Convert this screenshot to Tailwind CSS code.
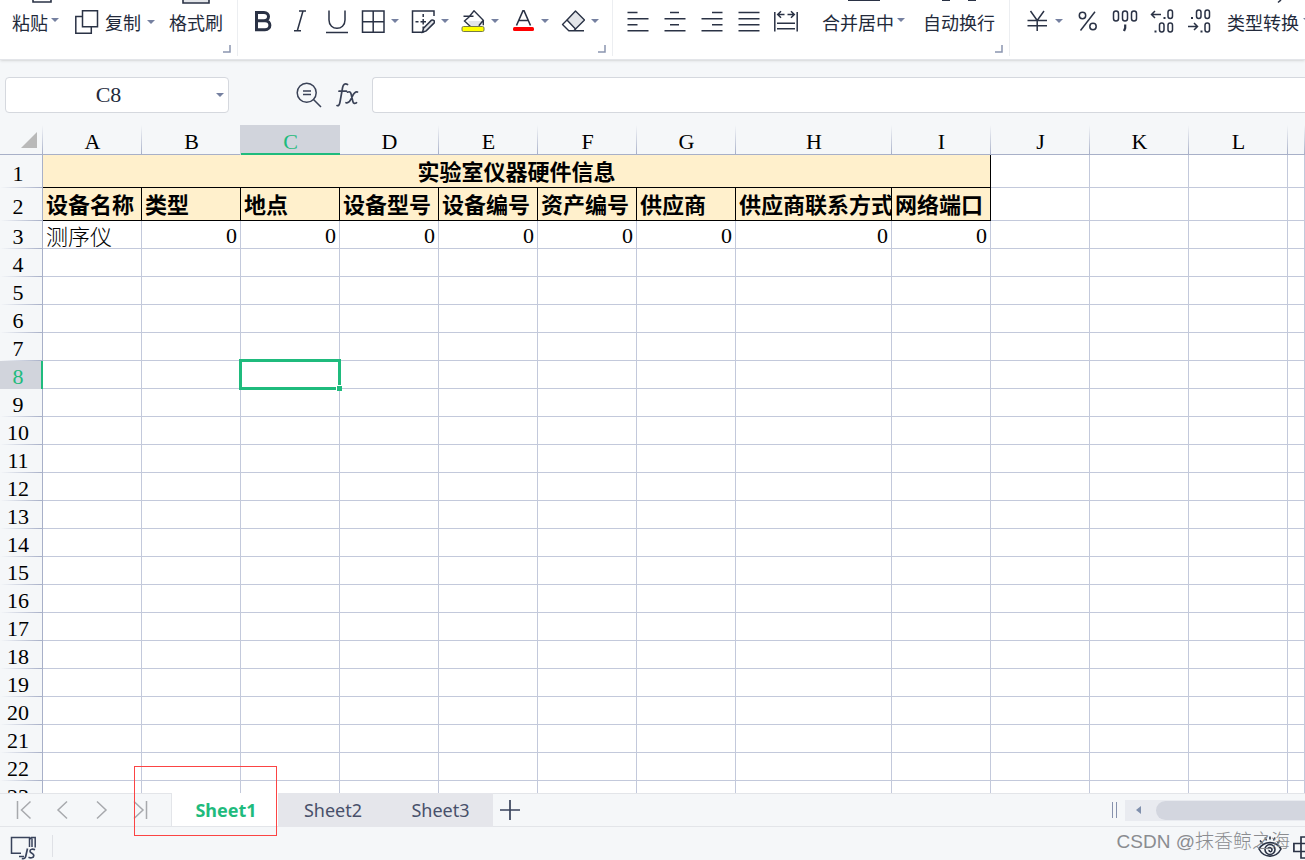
<!DOCTYPE html>
<html lang="zh-CN">
<head>
<meta charset="utf-8">
<title>Sheet1</title>
<script src="https://cdn.jsdelivr.net/npm/@tailwindcss/browser@4"></script>
</head>
<body class="relative flex h-dvh flex-col overflow-hidden bg-[#f5f7f9] font-['Noto_Sans','Noto_Sans_CJK_SC',sans-serif] text-[18px] text-[#232a3b]">

<svg class="hidden" aria-hidden="true">
  <symbol id="caret" viewBox="0 0 8 4"><path d="M0 0h8L4 4z" fill="#7580a0"/></symbol>
  <symbol id="launcher" viewBox="0 0 8 8"><path d="M7 0v7H0" fill="none" stroke="#8b95b0" stroke-width="1.5"/></symbol>
</svg>

<header class="flex h-[60px] shrink-0 overflow-hidden border-b border-[#e3e5e9] bg-white font-['Noto_Sans_CJK_SC',sans-serif] whitespace-nowrap shadow-sm">
  <section aria-label="剪贴板" class="relative flex h-14 w-[238px] shrink-0 border-r border-[#eceef1] pl-3">
    <button class="flex flex-col leading-6">
      <svg class="ml-5 h-1 w-6" viewBox="0 0 24 4" fill="none" stroke="#2a3245" stroke-width="1.6"><path d="M1-4v6h18v-6"/></svg>
      <span class="mt-1.5 flex gap-[3px]">粘贴 <svg class="mt-2 h-1 w-2"><use href="#caret"/></svg></span>
    </button>
    <button class="ml-4 flex items-start gap-1.5 pt-2.5 leading-6">
      <svg class="h-6 w-6" viewBox="0 0 24 24" fill="none" stroke="#2a3245" stroke-width="1.5"><path d="M7.500 .8h15v16h-15zM7.500 6.500h-6.700v16.700h15.500v-6"/></svg>
      <span>复制</span>
      <svg class="mt-2.5 h-1 w-2"><use href="#caret"/></svg>
    </button>
    <button class="ml-3.5 flex flex-col items-center leading-6">
      <svg class="h-1 w-7" viewBox="0 0 28 4" fill="#e3e5e9" stroke="#2a3245" stroke-width="1.6"><path d="M1-4v7h26v-7"/></svg>
      <span class="mt-1.5">格式刷</span>
    </button>
    <button aria-label="剪贴板设置" class="absolute right-1.5 bottom-[3px]"><svg class="h-2 w-2"><use href="#launcher"/></svg></button>
  </section>

  <section aria-label="字体" class="relative flex h-14 w-[375px] shrink-0 border-r border-[#eceef1] pt-2.5 pl-1.5">
    <button aria-label="加粗" class="flex w-[37px] justify-center"><svg class="h-6 w-6" viewBox="0 0 24 24" fill="none" stroke="#2a3245" stroke-width="3"><path d="M5.500 2.500h7.500c6 0 6 8.200 0 8.200H5.500zM5.500 10.700h8.500c6.500 0 6.500 9 0 9H5.500z"/></svg></button>
    <button aria-label="倾斜" class="flex w-[37px] justify-center"><svg class="h-6 w-6" viewBox="0 0 24 24" fill="none" stroke="#2a3245" stroke-width="1.500"><path d="M11 1h7M6 20.800h7M15 1L9.300 20.800"/></svg></button>
    <button aria-label="下划线" class="flex w-[37px] justify-center"><svg class="h-6 w-6" viewBox="0 0 24 24" fill="none" stroke="#2a3245" stroke-width="1.500"><path d="M4 .5v9.500c0 11 16 11 16 0V.5M1 22.500h22"/></svg></button>
    <button aria-label="边框" class="ml-1.5 flex w-[50px] gap-1.5"><svg class="h-6 w-6" viewBox="0 0 24 24" fill="none" stroke="#2a3245" stroke-width="1.500"><path d="M1.500 1h21.500v21.300H1.500zM12.200 1v21.300M1.500 11.700H23"/></svg><svg class="mt-[9px] h-1 w-2"><use href="#caret"/></svg></button>
    <button aria-label="绘图边框" class="flex w-[50px] gap-1.5"><svg class="h-6 w-6" viewBox="0 0 24 24" fill="none" stroke="#2a3245" stroke-width="1.500"><path d="M23 6V1H1.500v21.300h11"/><path d="M12.200 4v3m0 2v5.500m0 2v2M4.500 11.700h3m2 0h5.500"/><path d="M12.500 18.200l8-8c1.500-1 4 1.200 2.700 2.700l-8 8-3.700 1.400z" fill="#e3e5e9"/></svg><svg class="mt-[9px] h-1 w-2"><use href="#caret"/></svg></button>
    <button aria-label="填充颜色" class="flex w-[50px] gap-1.5"><svg class="h-6 w-6" viewBox="0 0 24 24" fill="none" stroke="#2a3245" stroke-width="1.400"><path d="M7 11h16l-3 5H10z" fill="#e3e5e9" stroke="none"/><path d="M7.500 7.500L13 .8l9.300 9.500-4.500 5.500M2.500 6.300h10M7.500 7.500L3.500 11l6 5.500M22.300 10.500v4.800"/><rect x="1" y="16.500" width="22" height="5" rx="1.500" fill="#ff0" stroke="#777b45" stroke-width="1"/></svg><svg class="mt-[9px] h-1 w-2"><use href="#caret"/></svg></button>
    <button aria-label="字体颜色" class="flex w-[50px] gap-1.5"><svg class="h-6 w-6" viewBox="0 0 24 24" fill="none" stroke="#2a3245" stroke-width="1.600"><path d="M5.500 15.500L12.300 0h.4l6.800 15.500M8 10.500h9"/><rect x="2" y="17" width="21" height="4" rx="1.500" fill="#f00" stroke="none"/></svg><svg class="mt-[9px] h-1 w-2"><use href="#caret"/></svg></button>
    <button aria-label="清除" class="flex gap-1.5"><svg class="h-6 w-6" viewBox="0 0 24 24" fill="none" stroke="#2a3245" stroke-width="1.400" stroke-linejoin="round"><path d="M14.500 1l9 9-9 9-8.500-9z" fill="#e3e5e9"/><path d="M6 10l-4.500 4.500 6.300 6.300h5l2-2M7.500 20.800H23"/></svg><svg class="mt-[9px] h-1 w-2"><use href="#caret"/></svg></button>
    <button aria-label="字体设置" class="absolute right-1.5 bottom-[3px]"><svg class="h-2 w-2"><use href="#launcher"/></svg></button>
  </section>

  <section aria-label="对齐方式" class="relative flex h-14 w-[397px] shrink-0 border-r border-[#eceef1] pl-1.5">
    <button aria-label="左对齐" class="flex w-[37px] justify-center pt-2.5"><svg class="h-6 w-6" viewBox="0 0 24 24" stroke="#2a3245" stroke-width="1.600"><path d="M1.500 2.500h10M1.500 8.700h21M1.500 14.700h10M1.500 20.700h21"/></svg></button>
    <button aria-label="居中" class="flex w-[37px] justify-center pt-2.5"><svg class="h-6 w-6" viewBox="0 0 24 24" stroke="#2a3245" stroke-width="1.600"><path d="M7 2.500h9M1.500 8.700h21M7 14.700h9M1.500 20.700h21"/></svg></button>
    <button aria-label="右对齐" class="flex w-[37px] justify-center pt-2.5"><svg class="h-6 w-6" viewBox="0 0 24 24" stroke="#2a3245" stroke-width="1.600"><path d="M12 2.500h10.500M1.500 8.700h21M12 14.700h10.500M1.500 20.700h21"/></svg></button>
    <button aria-label="两端对齐" class="flex w-[37px] justify-center pt-2.5"><svg class="h-6 w-6" viewBox="0 0 24 24" stroke="#2a3245" stroke-width="1.600"><path d="M1.500 2.500h21M1.500 8.700h21M1.500 14.700h21M1.500 20.700h21"/></svg></button>
    <button aria-label="分散对齐" class="flex w-[37px] justify-center pt-2.5"><svg class="h-6 w-6" viewBox="0 0 24 24" fill="none" stroke="#2a3245" stroke-width="1.500"><path d="M.8 2v19.500M23.200 2v19.500M3 13.200h18M3 18.700h18"/><path d="M10.500 4.500H4M7 1.200L3.700 4.500 7 7.800M13.500 4.500H20M17 1.200l3.300 3.300L17 7.800"/></svg></button>
    <button class="ml-[18px] flex flex-col leading-6">
      <svg class="ml-6 h-1 w-9" viewBox="0 0 36 4"><path d="M2 0h32" stroke="#2a3245" stroke-width="2"/></svg>
      <span class="mt-1.5 flex gap-[3px]">合并居中 <svg class="mt-2 h-1 w-2"><use href="#caret"/></svg></span>
    </button>
    <button class="ml-[18px] flex flex-col items-center leading-6">
      <svg class="h-1 w-9" viewBox="0 0 36 4"><path d="M1 0h8M27 0h8" stroke="#2a3245" stroke-width="2"/></svg>
      <span class="mt-1.5">自动换行</span>
    </button>
    <button aria-label="对齐设置" class="absolute right-1.5 bottom-[3px]"><svg class="h-2 w-2"><use href="#launcher"/></svg></button>
  </section>

  <section aria-label="数字" class="flex h-14 shrink-0 pl-4">
    <button aria-label="货币格式" class="flex gap-[5px] pt-2.5"><svg class="h-6 w-6" viewBox="0 0 24 24" fill="none" stroke="#2a3245" stroke-width="1.500"><path d="M4.500 1l6.700 9.500L18 1M11.200 10.500V21M1.500 10.500H21M1.500 15.800H21"/></svg><svg class="mt-[9px] h-1 w-2"><use href="#caret"/></svg></button>
    <button aria-label="百分比" class="ml-1.5 flex w-[37px] justify-center pt-2.5"><svg class="h-6 w-6" viewBox="0 0 24 24" fill="none" stroke="#2a3245" stroke-width="1.500"><circle cx="6.500" cy="5.500" r="3.200"/><circle cx="17" cy="16.500" r="3.200"/><path d="M19 1.800L4.500 20.500"/></svg></button>
    <button aria-label="千位分隔" class="flex w-[37px] justify-center pt-2.5"><svg class="h-6 w-[26px] overflow-visible" viewBox="0 0 26 24" fill="none" stroke="#2a3245" stroke-width="1.500"><rect x="1.500" y="1" width="5" height="10" rx="2.500"/><rect x="10.500" y="1" width="5" height="10" rx="2.500"/><rect x="19.500" y="1" width="5" height="10" rx="2.500"/><path d="M13.200 14.500v3.500l-1.200 3" stroke-width="2.200"/></svg></button>
    <button aria-label="增加小数位" class="flex w-[37px] justify-center pt-2.5"><svg class="h-6 w-6 overflow-visible" viewBox="0 0 24 24" fill="none" stroke="#2a3245" stroke-width="1.500"><path d="M11 4.500H1.500M5 1L1.500 4.500 5 8"/><path d="M13.500 8h2M4.500 21.500h2" stroke-width="2"/><rect x="18" y="0" width="4.500" height="8.500" rx="2.200"/><rect x="9.500" y="13" width="4.500" height="9" rx="2.200"/><rect x="18" y="13" width="4.500" height="9" rx="2.200"/></svg></button>
    <button aria-label="减少小数位" class="flex w-[37px] justify-center pt-2.5"><svg class="h-6 w-6 overflow-visible" viewBox="0 0 24 24" fill="none" stroke="#2a3245" stroke-width="1.500"><path d="M1 16.500h9.500M7 13l3.500 3.500L7 20"/><path d="M4 8h2M13.500 21.500h2" stroke-width="2"/><rect x="9.500" y="0" width="4.500" height="8.500" rx="2.200"/><rect x="18" y="0" width="4.500" height="8.500" rx="2.200"/><rect x="18" y="13" width="4.500" height="9" rx="2.200"/></svg></button>
    <button class="ml-2.5 flex flex-col leading-6">
      <svg class="ml-12 h-1 w-6" viewBox="0 0 24 4"><path d="M6 0L3 2.500" stroke="#2a3245" stroke-width="1.600"/></svg>
      <span class="mt-1.5 flex gap-1">类型转换 <svg class="mt-2 h-1 w-2"><use href="#caret"/></svg></span>
    </button>
  </section>
</header>

<div class="flex shrink-0 items-center pt-[17px] pb-3 pl-[5px]">
  <div class="flex h-9 w-56 items-center rounded border border-[#d5d8de] bg-white">
    <input aria-label="名称框" value="C8" class="h-full w-[205px] bg-transparent text-center font-['Liberation_Serif',serif] text-[22px] outline-none">
    <button aria-label="展开名称框" class="flex h-full flex-1 items-center pl-[5px]"><svg class="h-1 w-2"><use href="#caret"/></svg></button>
  </div>
  <button aria-label="查找" class="ml-[67px]"><svg class="h-[26px] w-[26px]" viewBox="0 0 26 26" fill="none" stroke="#3a4257" stroke-width="1.500"><circle cx="10.700" cy="10.700" r="9.500"/><path d="M17.500 17.500l7.500 7.500M7 9h8M7 12.500h8"/></svg></button>
  <button aria-label="插入函数" class="ml-3.5"><svg class="h-[26px] w-6" viewBox="0 0 24 26" fill="none" stroke="#3a4257" stroke-width="1.700" stroke-linecap="round"><path d="M11.500 2.500c-2.500-1.500-4.300 0-4.900 3L4 20c-.5 3-1.500 4-3 3.500M3 9.200h7.500M11.500 10.200c3-1.500 3.500 1 4 3.500l1.300 5.500c.5 2 1.500 2.800 3.700 1.500M21.500 10c-2-.8-3.500 1-5 4l-1.500 3c-1.300 2.800-2.800 4.500-5 3.700"/></svg></button>
  <input aria-label="编辑栏" class="ml-3 h-9 min-w-0 flex-1 rounded-l border border-r-0 border-[#d5d8de] bg-white px-2 outline-none">
</div>

<main class="min-h-0 flex-1 overflow-hidden">
  <table class="w-full table-fixed border-separate border-spacing-0 bg-white text-[22px] text-black">
    <colgroup id="cols"></colgroup>
    <thead><tr id="letters" class="h-[30px]"></tr></thead>
    <tbody id="rows"></tbody>
  </table>
</main>

<nav aria-label="工作表" class="flex h-[34px] shrink-0 items-stretch border-y border-[#e3e5e9] pl-1">
  <button aria-label="第一张" class="flex w-[39px] items-center justify-center"><svg class="h-5 w-4" viewBox="0 0 16 20" fill="none" stroke="#a7a9ad" stroke-width="1.500"><path d="M1.500 1v18M14.500 1.500L5.500 10l9 8.500"/></svg></button>
  <button aria-label="上一张" class="flex w-[39px] items-center justify-center"><svg class="h-5 w-4" viewBox="0 0 16 20" fill="none" stroke="#a7a9ad" stroke-width="1.500"><path d="M12 1.500L3 10l9 8.500"/></svg></button>
  <button aria-label="下一张" class="flex w-[39px] items-center justify-center"><svg class="h-5 w-4" viewBox="0 0 16 20" fill="none" stroke="#a7a9ad" stroke-width="1.500"><path d="M3 1.500l9 8.500-9 8.500"/></svg></button>
  <button aria-label="最后一张" class="flex w-[39px] items-center justify-center"><svg class="h-5 w-4" viewBox="0 0 16 20" fill="none" stroke="#a7a9ad" stroke-width="1.500"><path d="M1 1.500l9 8.500-9 8.500M13.500 1v18"/></svg></button>
  <button aria-current="page" class="-mt-px ml-[11px] w-[107px] border-l border-[#e3e5e9] bg-white pt-px pl-0.5 font-bold text-[#1fbb7d]">Sheet1</button>
  <button class="-my-px w-[107px] bg-[#e5e6eb] pl-[3px] text-[#48506a]">Sheet2</button>
  <button class="-my-px w-[108px] bg-[#e5e6eb] pl-[3px] text-[#48506a]">Sheet3</button>
  <button aria-label="新建工作表" class="px-[7px]"><svg class="h-5 w-5" viewBox="0 0 20 20" stroke="#39435c" stroke-width="1.700"><path d="M10 0v20M0 10h20"/></svg></button>
  <div class="ml-auto flex w-[193px] items-center">
    <div class="h-4 w-[5px] border-x border-[#8792ad]"></div>
    <div class="ml-2 flex h-[21px] flex-1 items-center bg-[#e9ebf0]">
      <button aria-label="向左滚动" class="flex w-[31px] justify-center pr-1"><svg class="h-2 w-[5px]" viewBox="0 0 5 8"><path d="M5 0v8L0 4z" fill="#8090ad"/></svg></button>
      <div class="h-[19px] flex-1 rounded-l-full bg-[#d3d6df]"></div>
    </div>
  </div>
</nav>

<footer class="relative flex h-[33px] shrink-0 items-center overflow-hidden pl-2.5">
  <button aria-label="宏" class="pt-2"><svg class="h-6 w-[27px]" viewBox="0 0 27 24" fill="none" stroke="#39435c" stroke-width="1.500"><path d="M19.500 11V1.500H1.500v15.800H11M9 20.500h5M19.500 3.500l2-2h3.700v10M22 2.500V11"/><path d="M17.500 12.500l-1.700 7.500c-.5 2.500-1.800 3-4 2.500M25 13.800c-2-1-4.800-.8-5 1.200-.2 2.500 4 2 3.800 4.700-.2 2.500-3.500 2.500-5.300 1.500" stroke-width="1.700"/></svg></button>
  <div class="mt-1 ml-[15px] h-[22px] w-px bg-[#dfe1e6]"></div>
  <div class="ml-auto flex items-center gap-[11px] pt-2">
    <button aria-label="护眼模式"><svg class="h-6 w-6" viewBox="0 0 24 24" fill="none" stroke="#2a3245" stroke-width="1.600"><path d="M1 13c5-8.500 17-8.500 22 0-5 9.500-17 9.500-22 0z"/><circle cx="12" cy="13.500" r="5"/><path d="M9.500 13c1.200-2.200 4.800-1.500 4.500 1s-3 2-3 0M2 4.500l2.500 3M7 1.500L8.500 4.500M12 .5V3.500M17 1.500L15.500 4.500M22 4.500l-2.500 3"/></svg></button>
    <button aria-label="阅读模式" class="w-3 overflow-hidden"><svg class="h-6 w-6" viewBox="0 0 24 24" fill="none" stroke="#2a3245" stroke-width="1.700"><path d="M8 1h7v21H8zM.9 7.500h21v8H.9z"/></svg></button>
  </div>
  <p class="absolute right-[15px] bottom-1 font-['Liberation_Sans','Noto_Sans_CJK_SC',sans-serif] text-[19px] leading-7 font-light whitespace-nowrap text-[#8a8c90]">CSDN @抹香鲸之海</p>
</footer>

<div aria-hidden="true" class="pointer-events-none absolute bottom-6 left-[134px] h-[70px] w-[143px] border border-[#fb4444]"></div>

<script>
const HEAD = "border-b border-[#a8b0c8] bg-[#f5f7f9] bg-[linear-gradient(to_bottom,transparent,#a8b0c8)] bg-[length:1px_100%] bg-right bg-no-repeat font-normal";
const HEAD_ACTIVE = 'border-b border-[#1fbb7d] bg-[#d1d4dc] font-normal text-[#1fbb7d] shadow-[inset_0_-1px_#1fbb7d,-1px_0_#d1d4dc]';
const NUM = "border-r border-[#a8b0c8] bg-[#f5f7f9] bg-[linear-gradient(to_right,transparent,#a8b0c8)] bg-[length:100%_1px] bg-bottom bg-no-repeat p-0 pr-1.5 font-normal";
const NUM_ACTIVE = 'border-r border-[#1fbb7d] bg-[#d1d4dc] p-0 pr-1.5 font-normal text-[#1fbb7d] shadow-[inset_-1px_0_#1fbb7d]';
const CELL = 'border-r border-b border-[#c3c9db] p-0';
const CELL_ACTIVE = 'relative z-10 border-r border-b border-[#c3c9db] p-0';
const TITLE = 'border-r border-b border-black bg-[#fff0cc] p-0 pb-[3px] text-center font-bold';
const FIELD = 'overflow-hidden border-r border-b border-black bg-[#fff0cc] p-0 pb-[3px] pl-[3px] text-left font-bold whitespace-nowrap';
const widths = [43, 99, 99, 99, 99, 99, 99, 99, 156, 99, 99, 99, 99];
const fields = ['设备名称', '类型', '地点', '设备型号', '设备编号', '资产编号', '供应商', '供应商联系方式', '网络端口'];

document.getElementById('cols').innerHTML = widths.map(w => `<col style="width:${w}px">`).join('') + '<col>';
document.getElementById('letters').innerHTML =
  `<th class="${HEAD} p-0"><svg class="ml-auto mr-1.5 h-4 w-4" viewBox="0 0 16 16"><path d="M16 0v16H0z" fill="#b9b9b9"/></svg></th>` +
  [...'ABCDEFGHIJKL'].map(c => `<th scope="col" class="${c === 'C' ? HEAD_ACTIVE : HEAD} p-0 pt-1"><span class="block font-['Liberation_Serif',serif] leading-6">${c}</span></th>`).join('') +
  `<th class="${HEAD} p-0"></th>`;

const blank = n => `<td class="${CELL}"></td>`.repeat(n);
let html = '';
for (let r = 1; r <= 23; r++) {
  let cells;
  if (r === 1) cells = `<td colspan="9" class="${TITLE}"><span class="block font-['Noto_Sans_CJK_SC',sans-serif] leading-7">实验室仪器硬件信息</span></td>` + blank(4);
  else if (r === 2) cells = fields.map(f => `<td class="${FIELD}"><span class="block font-['Noto_Sans_CJK_SC',sans-serif] leading-7">${f}</span></td>`).join('') + blank(4);
  else if (r === 3) cells = `<td class="${CELL}"><span class="block pl-[3px] font-['Noto_Sans_CJK_SC',sans-serif] leading-6 font-light">测序仪</span></td>` +
    `<td class="${CELL}"><span class="block pt-[3px] pr-[3px] text-right font-['Liberation_Serif',serif] leading-6">0</span></td>`.repeat(8) + blank(4);
  else if (r === 8) cells = blank(2) + `<td class="${CELL_ACTIVE}"><div class="absolute -inset-0.5 border-[3px] border-[#1fbb7d]"><div class="absolute -right-1 -bottom-1 h-1.5 w-1.5 border-t border-l border-white bg-[#1fbb7d]"></div></div></td>` + blank(10);
  else cells = blank(13);
  html += `<tr class="${r < 3 ? 'h-[33px]' : 'h-7'}"><th scope="row" class="${r === 8 ? NUM_ACTIVE : NUM}"><span class="block pt-1 font-['Liberation_Serif',serif] leading-6">${r}</span></th>${cells}</tr>`;
}
document.getElementById('rows').innerHTML = html;
</script>
</body>
</html>
